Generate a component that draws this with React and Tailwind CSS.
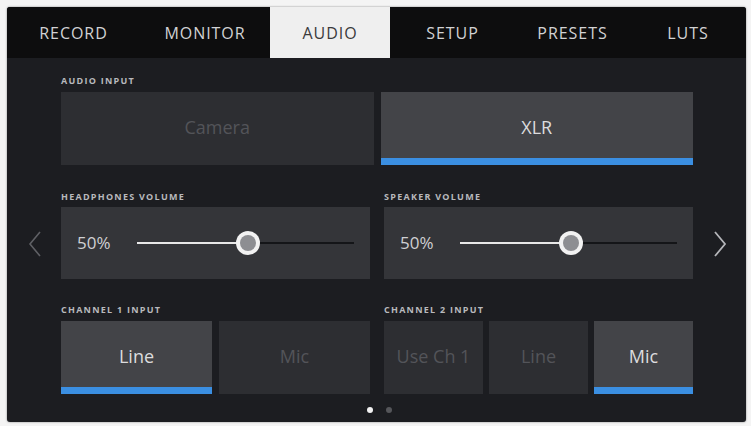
import React from "react";

const tabs = [
  { label: "RECORD", w: "w-[133px]" },
  { label: "MONITOR", w: "w-[130px]" },
  { label: "AUDIO", w: "w-[120px]", active: true },
  { label: "SETUP", w: "w-[125px]" },
  { label: "PRESETS", w: "w-[115px]" },
  { label: "LUTS", w: "flex-1" },
];

function Label({ children }) {
  return (
    <div className="h-[10px] text-[9px] leading-[10px] font-bold tracking-[0.14em] text-[#b8b9bd] uppercase">
      {children}
    </div>
  );
}

function Btn({ children, active, selected, className = "" }) {
  return (
    <div
      className={`relative flex items-center justify-center h-full ${
        active ? "bg-[#434448] text-[#dcdcde]" : "bg-[#2d2e32] text-[#535459]"
      } ${className}`}
    >
      <span className="text-[18px] pb-[3px]">{children}</span>
      {selected && (
        <div className="absolute left-0 right-0 bottom-0 h-[7px] bg-[#3b8fe2]" />
      )}
    </div>
  );
}

function Slider({ knob }) {
  return (
    <div className="flex items-center h-[72px] bg-[#343539] pl-[16px] pr-[16px]">
      <span className="text-[17px] text-[#cfd0d3] w-[60px]">50%</span>
      <div className="relative flex-1 h-[24px]">
        <div className="absolute left-0 right-0 top-[11px] h-[2px] bg-[#141518]" />
        <div
          className="absolute left-0 top-[11px] h-[2px] bg-[#e8e8e8]"
          style={{ width: `${knob}px` }}
        />
        <div
          className="absolute top-0 w-[24px] h-[24px] rounded-full bg-[#f2f2f2] flex items-center justify-center"
          style={{ left: `${knob - 12}px` }}
        >
          <div className="w-[16px] h-[16px] rounded-full bg-[#8d8e92]" />
        </div>
      </div>
    </div>
  );
}

export default function App() {
  return (
    <div
      className="w-[751px] h-[426px] bg-[#f4f4f4] pt-[7px] pl-[7px] pr-[5px] pb-[4px]"
      style={{ fontFamily: '"Open Sans", "Liberation Sans", sans-serif' }}
    >
      <div className="w-full h-full flex flex-col rounded-[3px] overflow-hidden bg-[#1c1d21] shadow-[0_0_2px_rgba(0,0,0,0.5)]">
        <div className="flex h-[51px] bg-[#0d0d0e] shrink-0">
          {tabs.map((t) => (
            <div
              key={t.label}
              className={`${t.w} flex items-center justify-center text-[16px] tracking-[0.06em] ${
                t.active ? "bg-[#efefef] text-[#3a3a3c]" : "text-[#d2d2d4]"
              }`}
            >
              {t.label}
            </div>
          ))}
        </div>

        <div className="relative flex-1 flex">
          <div className="w-[54px] flex items-start justify-center pt-[172px]">
            <svg width="16" height="28" viewBox="0 0 16 28" className="ml-[2px]">
              <path d="M13 2 L3 14 L13 26" fill="none" stroke="#5f6065" strokeWidth="1.6" />
            </svg>
          </div>

          <div className="w-[632px] flex flex-col">
            <div className="pt-[18px]">
              <Label>Audio Input</Label>
              <div className="mt-[6px] h-[73px] flex gap-[7px]">
                <Btn className="flex-1">Camera</Btn>
                <Btn className="flex-1" active selected>
                  XLR
                </Btn>
              </div>
            </div>

            <div className="mt-[27px] flex gap-[14px]">
              <div className="flex-1">
                <Label>Headphones Volume</Label>
                <div className="mt-[5px]">
                  <Slider knob={111} />
                </div>
              </div>
              <div className="flex-1">
                <Label>Speaker Volume</Label>
                <div className="mt-[5px]">
                  <Slider knob={111} />
                </div>
              </div>
            </div>

            <div className="mt-[26px] flex gap-[14px]">
              <div className="flex-1">
                <Label>Channel 1 Input</Label>
                <div className="mt-[6px] h-[73px] flex gap-[7px]">
                  <Btn className="flex-1" active selected>
                    Line
                  </Btn>
                  <Btn className="flex-1">Mic</Btn>
                </div>
              </div>
              <div className="flex-1">
                <Label>Channel 2 Input</Label>
                <div className="mt-[6px] h-[73px] flex gap-[6px]">
                  <Btn className="flex-1">Use Ch 1</Btn>
                  <Btn className="flex-1">Line</Btn>
                  <Btn className="flex-1" active selected>
                    Mic
                  </Btn>
                </div>
              </div>
            </div>

            <div className="flex justify-center gap-[13px] mt-[13px] pl-[4px]">
              <div className="w-[6px] h-[6px] rounded-full bg-[#f2f2f2]" />
              <div className="w-[6px] h-[6px] rounded-full bg-[#55565a]" />
            </div>
          </div>

          <div className="flex-1 flex items-start justify-center pt-[172px]">
            <svg width="16" height="28" viewBox="0 0 16 28">
              <path d="M3 2 L13 14 L3 26" fill="none" stroke="#b4b5b9" strokeWidth="1.8" />
            </svg>
          </div>
        </div>
      </div>
    </div>
  );
}
